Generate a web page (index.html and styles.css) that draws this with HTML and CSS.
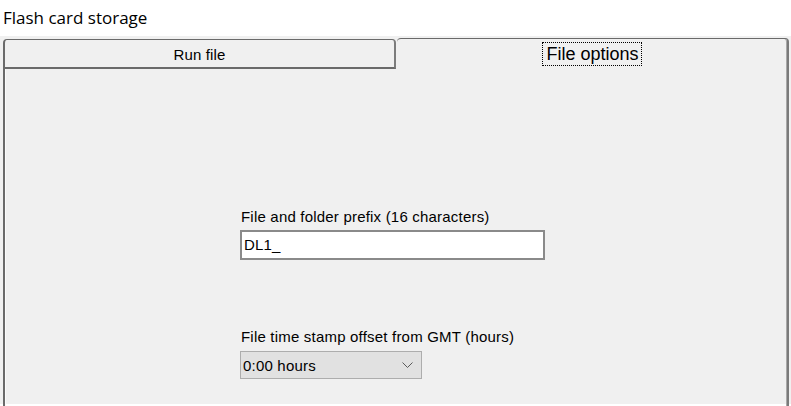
FILE: index.html
```html
<!DOCTYPE html>
<html>
<head>
<meta charset="utf-8">
<link rel="stylesheet" href="styles.css">
</head>
<body>
<div class="title">Flash card storage</div>
<div class="frame">
  <div class="tabs">
    <div class="tab tab-run">Run file</div>
    <div class="tab tab-active"><span class="focus">File options</span></div>
  </div>
  <div class="panel">
    <div class="group">
      <label class="label">File and folder prefix (16 characters)</label>
      <div class="textbox">DL1_</div>
    </div>
    <div class="group group-second">
      <label class="label">File time stamp offset from GMT (hours)</label>
      <div class="select">
        <span>0:00 hours</span>
        <svg class="chevron" width="11" height="6" viewBox="0 0 11 6"><path d="M0.5 0.5 L5.5 5.5 L10.5 0.5" fill="none" stroke="#5a5a5a" stroke-width="1"/></svg>
      </div>
    </div>
  </div>
</div>
</body>
</html>
```
FILE: styles.css
```css
html, body {
  margin: 0;
  padding: 0;
  background: #ffffff;
  overflow: hidden;
}
body {
  width: 791px;
  height: 406px;
  font-family: "Liberation Sans", Arial, sans-serif;
  color: #000;
}
.title {
  height: 36px;
  line-height: 36px;
  padding-left: 3px;
  font-family: "Open Sans", "Noto Sans", sans-serif;
  font-size: 17px;
  color: #000;
}
.frame {
  background: #f0f0f0;
  padding: 2px 2px 0 3px;
  height: 368px;
  box-sizing: border-box;
}
.tabs {
  display: flex;
  align-items: flex-end;
  gap: 1px;
}
.tab {
  box-sizing: border-box;
  background: #f0f0f0;
  font-size: 15px;
  letter-spacing: 0.15px;
  display: flex;
  align-items: center;
  justify-content: center;
}
.tab-run {
  width: 393px;
  height: 30px;
  border-top: 1px solid #6a6a6a;
  border-left: 2px solid #6a6a6a;
  border-right: 2px solid #7c7c7c;
  border-bottom: 2px solid #6a6a6a;
  border-top-left-radius: 4px;
  border-top-right-radius: 4px;
  padding-top: 1px;
}
.tab-active {
  width: 392px;
  height: 31px;
  border-top: 1px solid #6a6a6a;
  border-right: 2px solid #7a7a7a;
  border-top-left-radius: 4px;
  border-top-right-radius: 4px;
  box-shadow: inset -1px 0 #a8a8a8;
  align-items: flex-start;
  padding-top: 4px;
}
.focus {
  font-size: 18px;
  letter-spacing: 0;
  outline: 1px dotted #000;
  outline-offset: 0;
  padding: 2px 2px 1px 3px;
  line-height: 19px;
}
.panel {
  box-sizing: border-box;
  height: 337px;
  border-left: 2px solid #6a6a6a;
  border-right: 2px solid #7a7a7a;
  box-shadow: inset -1px 0 #a8a8a8, inset 1px 0 #fbfbfb;
  padding-top: 139px;
  padding-left: 235px;
}
.group {
  display: flex;
  flex-direction: column;
  align-items: flex-start;
}
.group-second {
  margin-top: 68px;
}
.label {
  font-size: 15px;
  line-height: 17px;
  letter-spacing: 0.2px;
  padding-left: 1px;
  margin-bottom: 5px;
}
.textbox {
  box-sizing: border-box;
  width: 305px;
  height: 30px;
  background: #fff;
  border: 2px solid #8a8a8a;
  font-size: 15px;
  letter-spacing: 0.2px;
  line-height: 26px;
  padding-left: 2px;
}
.group-second .label {
  margin-bottom: 6px;
}
.select {
  box-sizing: border-box;
  width: 182px;
  height: 28px;
  background: #e1e1e1;
  border: 1px solid #adadad;
  font-size: 15px;
  letter-spacing: 0.2px;
  display: flex;
  align-items: center;
  justify-content: space-between;
  padding-left: 2px;
  padding-right: 8px;
}
.chevron {
  display: block;
}
```
